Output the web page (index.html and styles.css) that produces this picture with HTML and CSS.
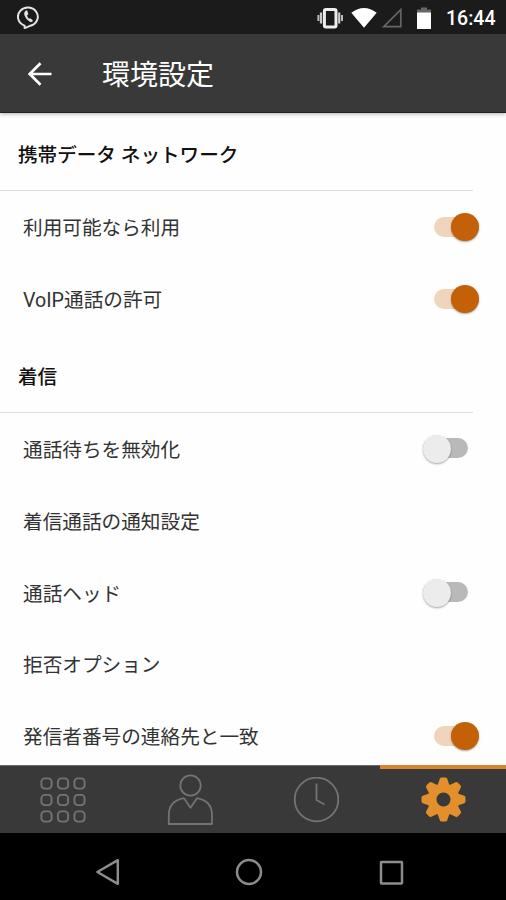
FILE: index.html
```html
<!DOCTYPE html>
<html lang="ja">

<head>
    <meta charset="UTF-8">
    <meta name="viewport" content="width=device-width, initial-scale=1.0">
    <title>環境設定</title>
    <link rel="stylesheet" href="styles.css">
</head>

<body>
    <!-- Status bar -->
    <div class="status-bar">
        <svg class="status-app" width="24" height="24" viewBox="0 0 24 24">
            <path d="M7.6 22V19.6A9.9 9.3 0 1 1 12.5 20Q10.5 21.4 7.6 22Z" fill="none" stroke="#e4e4e4" stroke-width="2" stroke-linejoin="round"/>
            <path d="M8.6 4.6Q6.6 6.4 7.5 9.6Q9 13.8 12.8 15.7Q14.8 16.6 16 14.8L13.4 12.2L12 12.8Q10.4 11.2 10 9.4L11.4 8.2L10.2 4.6Z" fill="#e4e4e4"/>
        </svg>
        <div class="status-right">
            <svg width="26" height="22" viewBox="0 0 26 22">
                <rect x="7.4" y="2.4" width="11.6" height="17.6" rx="1.5" fill="none" stroke="#eee" stroke-width="3"/>
                <path d="M4 5.5V16.5M22.2 5.5V16.5" stroke="#ccc" stroke-width="2.2"/>
                <path d="M1.4 8V14M25 8V14" stroke="#bbb" stroke-width="2"/>
            </svg>
            <svg class="wifi" width="26" height="20" viewBox="0 0 26 20">
                <path d="M.3 4.8Q13-4.8 25.7 4.8L13 19.8Z" fill="#fff"/>
            </svg>
            <svg class="signal" width="20" height="20" viewBox="0 0 20 20">
                <path d="M1.8 18.6H18.8V1.6Z" fill="none" stroke="#666" stroke-width="1.7"/>
            </svg>
            <svg class="battery" width="14" height="22" viewBox="0 0 14 22">
                <path d="M4 .5H10V2.5H14V6H0V2.5H4Z" fill="#666"/>
                <path d="M0 5.5H14V22H0Z" fill="#fff"/>
            </svg>
            <span class="clock">16:44</span>
        </div>
    </div>

    <!-- Header -->
    <header class="app-bar">
        <svg class="back" width="24" height="24" viewBox="0 0 24 24">
            <path d="M23.5 12H2M12.5 1.2L1.7 12L12.5 22.8" fill="none" stroke="#fff" stroke-width="2.7"/>
        </svg>
        <h1>環境設定</h1>
    </header>

    <!-- Settings -->
    <main class="settings">
        <h2>携帯データ ネットワーク</h2>
        <div class="row"><span>利用可能なら利用</span><i class="switch on"></i></div>
        <div class="row"><span>VoIP通話の許可</span><i class="switch on"></i></div>

        <h2>着信</h2>
        <div class="row"><span>通話待ちを無効化</span><i class="switch"></i></div>
        <div class="row"><span>着信通話の通知設定</span></div>
        <div class="row"><span>通話ヘッド</span><i class="switch"></i></div>
        <div class="row"><span>拒否オプション</span></div>
        <div class="row"><span>発信者番号の連絡先と一致</span><i class="switch on"></i></div>
    </main>

    <!-- Tabs -->
    <nav class="tabs">
        <div class="tab">
            <svg width="46" height="46" viewBox="0 0 46 46" fill="none" stroke="#737373" stroke-width="1.9">
                <rect x="1.4" y="1.4" width="10.2" height="10.2" rx="3.4"/>
                <rect x="17.9" y="1.4" width="10.2" height="10.2" rx="3.4"/>
                <rect x="34.4" y="1.4" width="10.2" height="10.2" rx="3.4"/>
                <rect x="1.4" y="17.9" width="10.2" height="10.2" rx="3.4"/>
                <rect x="17.9" y="17.9" width="10.2" height="10.2" rx="3.4"/>
                <rect x="34.4" y="17.9" width="10.2" height="10.2" rx="3.4"/>
                <rect x="1.4" y="34.4" width="10.2" height="10.2" rx="3.4"/>
                <rect x="17.9" y="34.4" width="10.2" height="10.2" rx="3.4"/>
                <rect x="34.4" y="34.4" width="10.2" height="10.2" rx="3.4"/>
            </svg>
        </div>
        <div class="tab">
            <svg width="46" height="52" viewBox="0 0 46 52" fill="none" stroke="#737373" stroke-width="1.8" stroke-linejoin="round">
                <circle cx="23.5" cy="11.5" r="10.2"/>
                <path d="M17 24.2L23.5 33.8L30 24.2Q45 27 45 41V50H1.8V41Q1.8 27 17 24.2Z"/>
            </svg>
        </div>
        <div class="tab">
            <svg width="46" height="46" viewBox="0 0 46 46" fill="none" stroke="#737373" stroke-width="1.8">
                <circle cx="23.5" cy="22.5" r="21.8"/>
                <path d="M23.5 6.5V23L31.5 27.5"/>
            </svg>
        </div>
        <div class="tab active">
            <svg width="46" height="46" viewBox="-23.5 -22.5 46 46" fill="#e38f2c">
                <defs>
                    <path id="tooth" d="M-6.2-13.5L-3.7-20.8Q-3.3-22-2-22H2Q3.3-22 3.7-20.8L6.2-13.5Z"/>
                </defs>
                <circle r="11.5" fill="none" stroke="#e38f2c" stroke-width="9"/>
                <use href="#tooth"/>
                <use href="#tooth" transform="rotate(45)"/>
                <use href="#tooth" transform="rotate(90)"/>
                <use href="#tooth" transform="rotate(135)"/>
                <use href="#tooth" transform="rotate(180)"/>
                <use href="#tooth" transform="rotate(225)"/>
                <use href="#tooth" transform="rotate(270)"/>
                <use href="#tooth" transform="rotate(315)"/>
            </svg>
        </div>
    </nav>

    <!-- Android navigation -->
    <div class="system-nav">
        <svg width="28" height="28" viewBox="0 0 28 28"><path d="M24.8 2.2V25.8L4.4 14Z"/></svg>
        <svg width="28" height="28" viewBox="0 0 28 28"><circle cx="14" cy="14" r="12"/></svg>
        <svg width="28" height="28" viewBox="0 0 28 28"><rect x="4" y="4" width="21" height="21.5" rx=".5"/></svg>
    </div>
</body>

</html>
```
FILE: styles.css
```css
* {
    box-sizing: border-box;
}

body {
    margin: 0;
    height: 900px;
    display: flex;
    flex-direction: column;
    overflow: hidden;
    background: #fefefe;
    color: #333;
    font-family: Roboto, "Noto Sans CJK JP", sans-serif;
}

svg {
    display: block;
    flex: none;
}

/* Status bar */
.status-bar {
    height: 34px;
    flex: none;
    display: flex;
    justify-content: space-between;
    align-items: center;
    padding: 1px 10px 0 17px;
    background: #1b1b1b;
}

.status-right {
    display: flex;
    align-items: center;
}

.wifi {
    margin-left: 8px;
}

.signal {
    margin-left: 5px;
}

.battery {
    margin-left: 15px;
}

.clock {
    width: 50px;
    margin-left: 15px;
    padding-top: 2px;
    color: #fff;
    font-size: 19.5px;
    font-weight: 500;
    line-height: 24px;
    white-space: nowrap;
}

/* Header */
.app-bar {
    position: relative;
    height: 79px;
    flex: none;
    display: flex;
    align-items: center;
    padding: 1px 0 0 28px;
    background: #393939;
    border-bottom: 1px solid #222;
    box-shadow: 0 1px 4px rgba(0, 0, 0, 0.3);
}

.app-bar h1 {
    margin: 0 0 0 50px;
    padding-top: 5px;
    color: #fff;
    font-size: 28px;
    font-weight: 400;
    line-height: 40px;
}

/* Settings */
.settings {
    flex: 1;
    min-height: 0;
    overflow: hidden;
}

.settings h2 {
    height: 78px;
    margin: 0 33px 0 0;
    padding: 7px 0 0 18px;
    border-bottom: 1px solid #dcdcdc;
    color: #111;
    font-size: 19.6px;
    font-weight: 500;
    line-height: 72px;
}

.row {
    height: 71.8px;
    display: flex;
    align-items: center;
    justify-content: space-between;
    padding: 0 26px 0 23px;
    font-size: 19.65px;
}

.switch {
    position: relative;
    width: 45px;
    height: 20px;
    margin-right: 12px;
    border-radius: 10px;
    background: #b9b9b9;
}

.switch::before {
    content: "";
    position: absolute;
    top: -3px;
    left: 0;
    width: 28px;
    height: 28px;
    border-radius: 50%;
    background: #ececec;
    box-shadow: 0 1px 2px rgba(0, 0, 0, 0.35);
}

.switch.on {
    margin-right: 1px;
    background: #f0d5bd;
}

.switch.on::before {
    top: -4px;
    left: auto;
    right: 0;
    background: #c46008;
}

/* Tabs */
.tabs {
    height: 68px;
    flex: none;
    display: flex;
    background: #393939;
    border-top: 1px solid #6b6b6b;
}

.tab {
    position: relative;
    flex: 1;
    display: flex;
    align-items: center;
    justify-content: center;
}

.tab.active::before {
    content: "";
    position: absolute;
    top: -1px;
    left: 0;
    right: 0;
    height: 4px;
    background: #d98530;
}

/* Android navigation */
.system-nav {
    height: 67px;
    flex: none;
    display: flex;
    justify-content: center;
    align-items: center;
    gap: 114px;
    padding: 10px 9px 0 0;
    background: #000;
}

.system-nav svg {
    fill: none;
    stroke: #8c8c8c;
    stroke-width: 2.5;
    stroke-linejoin: round;
}
```
